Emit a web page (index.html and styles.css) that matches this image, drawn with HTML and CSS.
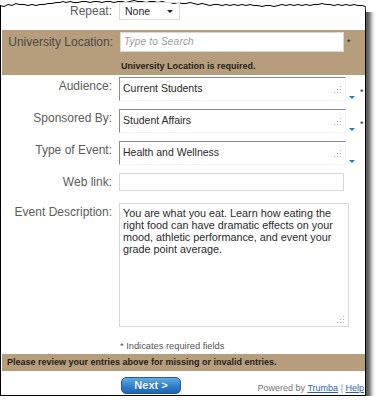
FILE: index.html
```html
<!DOCTYPE html>
<html lang="en">
<head>
    <meta charset="UTF-8">
    <title>Event Details</title>
    <link rel="stylesheet" href="styles.css">
</head>
<body>
    <div class="page">
        <svg class="tear" width="380" height="14" viewBox="0 0 380 14">
            <polygon fill="#fff" points="0,0 0,5 4,6 8,4 12,5 16,3 19,4 24,4 28,5 32,4 36,5 40,4 44,4 48,3 52,3 56,2 60,2 63,1 66,2 70,1 74,2 78,2 82,1 86,1 90,2 94,1 98,1 102,2 106,1 110,1 114,2 118,1 122,1 126,2 130,1 134,0 138,1 142,1 146,2 150,1 154,1 158,2 162,1 166,2 170,2 174,3 178,2 182,3 186,3 190,2 194,3 198,4 202,3 206,4 210,5 214,4 218,4 222,5 226,4 230,5 234,4 238,5 242,4 246,5 250,4 254,5 258,5 262,6 266,5 270,5 274,6 278,5 282,4 286,5 290,4 294,5 298,4 302,5 306,4 310,5 314,4 318,4 322,3 326,4 330,4 334,5 338,4 342,5 346,4 350,5 354,4 358,5 362,5 365.5,6 366,12 380,12 380,0"/>
            <polyline fill="none" stroke="#000" stroke-width="1" points="0,5.5 4,6.5 8,4.5 12,5.5 16,3.5 19,4.5 24,4.5 28,5.5 32,4.5 36,5.5 40,4.5 44,4.5 48,3.5 52,3.5 56,2.5 60,2.5 63,1.5 66,2.5 70,1.5 74,2.5 78,2.5 82,1.5 86,1.5 90,2.5 94,1.5 98,1.5 102,2.5 106,1.5 110,1.5 114,2.5 118,1.5 122,1.5 126,2.5 130,1.5 134,0.5 138,1.5 142,1.5 146,2.5 150,1.5 154,1.5 158,2.5 162,1.5 166,2.5 170,2.5 174,3.5 178,2.5 182,3.5 186,3.5 190,2.5 194,3.5 198,4.5 202,3.5 206,4.5 210,5.5 214,4.5 218,4.5 222,5.5 226,4.5 230,5.5 234,4.5 238,5.5 242,4.5 246,5.5 250,4.5 254,5.5 258,5.5 262,6.5 266,5.5 270,5.5 274,6.5 278,5.5 282,4.5 286,5.5 290,4.5 294,5.5 298,4.5 302,5.5 306,4.5 310,5.5 314,4.5 318,4.5 322,3.5 326,4.5 330,4.5 334,5.5 338,4.5 342,5.5 346,4.5 350,5.5 354,4.5 358,5.5 362,5.5 365.5,6.5"/>
        </svg>

        <div class="row row-center">
            <div class="label">Repeat:</div>
            <div class="field">
                <div class="select">None<span class="select-caret"></span></div>
            </div>
        </div>

        <div class="band band-location">
            <div class="row row-center">
                <div class="label label-dark">University Location:</div>
                <div class="field">
                    <div class="search">Type to Search</div>
                    <span class="req req-location">*</span>
                </div>
            </div>
            <div class="error">University Location is required.</div>
        </div>

        <div class="rows">
            <div class="row">
                <div class="label">Audience:</div>
                <div class="field">
                    <div class="picker">Current Students<svg class="grip" width="8" height="8"><rect x="7" y="1" width="1" height="1"/><rect x="4" y="4" width="1" height="1"/><rect x="7" y="4" width="1" height="1"/><rect x="1" y="7" width="1" height="1"/><rect x="4" y="7" width="1" height="1"/><rect x="7" y="7" width="1" height="1"/></svg></div>
                    <span class="drop"></span>
                    <span class="req">*</span>
                </div>
            </div>
            <div class="row">
                <div class="label">Sponsored By:</div>
                <div class="field">
                    <div class="picker">Student Affairs<svg class="grip" width="8" height="8"><rect x="7" y="1" width="1" height="1"/><rect x="4" y="4" width="1" height="1"/><rect x="7" y="4" width="1" height="1"/><rect x="1" y="7" width="1" height="1"/><rect x="4" y="7" width="1" height="1"/><rect x="7" y="7" width="1" height="1"/></svg></div>
                    <span class="drop"></span>
                    <span class="req">*</span>
                </div>
            </div>
            <div class="row">
                <div class="label">Type of Event:</div>
                <div class="field">
                    <div class="picker">Health and Wellness<svg class="grip" width="8" height="8"><rect x="7" y="1" width="1" height="1"/><rect x="4" y="4" width="1" height="1"/><rect x="7" y="4" width="1" height="1"/><rect x="1" y="7" width="1" height="1"/><rect x="4" y="7" width="1" height="1"/><rect x="7" y="7" width="1" height="1"/></svg></div>
                    <span class="drop"></span>
                </div>
            </div>
            <div class="row row-center">
                <div class="label">Web link:</div>
                <div class="field">
                    <div class="textbox"></div>
                </div>
            </div>
            <div class="row row-desc">
                <div class="label">Event Description:</div>
                <div class="field">
                    <div class="textarea">You are what you eat. Learn how eating the right food can have dramatic effects on your mood, athletic performance, and event your grade point average.<svg class="grip grip-bottom" width="8" height="8"><rect x="7" y="1" width="1" height="1"/><rect x="4" y="4" width="1" height="1"/><rect x="7" y="4" width="1" height="1"/><rect x="1" y="7" width="1" height="1"/><rect x="4" y="7" width="1" height="1"/><rect x="7" y="7" width="1" height="1"/></svg></div>
                </div>
            </div>
        </div>

        <div class="note">* Indicates required fields</div>

        <div class="band band-review">Please review your entries above for missing or invalid entries.</div>

        <div class="footer">
            <a href="#" class="next">Next &gt;</a>
            <div class="powered">Powered by <a href="#">Trumba</a> <span class="sep">|</span> <a href="#">Help</a></div>
        </div>
    </div>
</body>
</html>
```

FILE: styles.css
```css
body {
    margin: 0;
    background: #fff;
    font-family: "Liberation Sans", Arial, sans-serif;
    color: #333;
}

.page {
    position: relative;
    width: 364px;
    padding-top: 2px;
    background: #fff;
    border: 1px solid #000;
    border-top: none;
    box-shadow: 5px 5px 4px rgba(0, 0, 0, 0.65);
}

/* torn top edge of the screenshot */
.tear {
    position: absolute;
    top: 0;
    left: -1px;
}

.row {
    display: grid;
    grid-template-columns: 111px 1fr;
    column-gap: 7px;
    align-items: start;
}

.row-center {
    align-items: center;
}

.label {
    text-align: right;
    font-size: 12px;
    line-height: 14px;
    color: #5c5c5c;
}

.row .label {
    padding-top: 2px;
}

.row-center .label {
    padding-top: 0;
}

.label-dark {
    color: #4a4a4a;
}

.field {
    display: flex;
    align-items: flex-end;
}

.select {
    position: relative;
    width: 54px;
    height: 16px;
    padding-left: 5px;
    border: 1px solid #ddd;
    font-size: 10.5px;
    line-height: 16px;
    color: #222;
}

.select-caret {
    position: absolute;
    right: 6px;
    top: 7px;
    border-left: 3px solid transparent;
    border-right: 3px solid transparent;
    border-top: 3px solid #222;
}

.band {
    background: #b69e7d;
    margin-left: 1px;
}

.band-location {
    margin-top: 10px;
    padding: 2px 0 3px;
}

.search {
    width: 219px;
    height: 18px;
    padding-left: 3px;
    background: #fff;
    border: 1px solid #d8d8d8;
    font-size: 10px;
    font-style: italic;
    line-height: 18px;
    color: #9a9a9a;
    letter-spacing: 0.2px;
}

.req {
    font-size: 9px;
    line-height: 9px;
    color: #222;
}

.req-location {
    align-self: center;
    margin-left: 3px;
}

.error {
    margin: 8px 0 0 119px;
    font-size: 9px;
    font-weight: bold;
    line-height: 12px;
    color: #1e1e1e;
}

.rows {
    display: flex;
    flex-direction: column;
    gap: 8px;
    margin-top: 2px;
}

.picker {
    position: relative;
    width: 222px;
    height: 18px;
    padding: 4px 0 0 3px;
    border-top: 1px solid #8a8a8a;
    border-left: 1px solid #8a8a8a;
    border-right: 1px solid #f4f4f4;
    border-bottom: 1px solid #f4f4f4;
    font-size: 10.5px;
    line-height: 12px;
    color: #2a2a2a;
}

.grip {
    position: absolute;
    right: 4px;
    top: 7px;
    fill: #b5b5b5;
}

.grip-bottom {
    top: auto;
    bottom: 3px;
}

.drop {
    margin: 0 0 2px 3px;
    border-left: 3.5px solid transparent;
    border-right: 3.5px solid transparent;
    border-top: 3.5px solid #1a7ec6;
}

.picker ~ .req {
    align-self: center;
    margin: 7px 0 0 5px;
}

.textbox {
    width: 223px;
    height: 16px;
    border: 1px solid #d8d8d8;
}

.row-desc {
    margin-top: 4px;
}

.textarea {
    position: relative;
    width: 222px;
    height: 116px;
    padding: 3px 3px 3px 3px;
    border: 1px solid #d8d8d8;
    font-size: 10.8px;
    line-height: 12px;
    color: #2a2a2a;
}

.note {
    margin: 13px 0 0 119px;
    font-size: 9.3px;
    line-height: 12px;
    color: #555;
}

.band-review {
    margin-top: 2px;
    padding-left: 5px;
    font-size: 9px;
    font-weight: bold;
    line-height: 17px;
    color: #1e1e1e;
}

.footer {
    display: flex;
    align-items: center;
    margin-top: 6px;
    padding: 0 1px 1px 120px;
}

.next {
    width: 58px;
    height: 15px;
    border: 1px solid #24599a;
    border-radius: 5px;
    background: linear-gradient(#62ace4, #2f7fcb 55%, #1d66b3);
    color: #fff;
    font-size: 11px;
    font-weight: bold;
    line-height: 15px;
    text-align: center;
    text-decoration: none;
    text-shadow: 0 0 1px #1d4f86;
}

.powered {
    margin-left: auto;
    padding-top: 4px;
    font-size: 9px;
    color: #777;
}

.powered a {
    color: #2a62b0;
}

.powered .sep {
    color: #999;
}
```
